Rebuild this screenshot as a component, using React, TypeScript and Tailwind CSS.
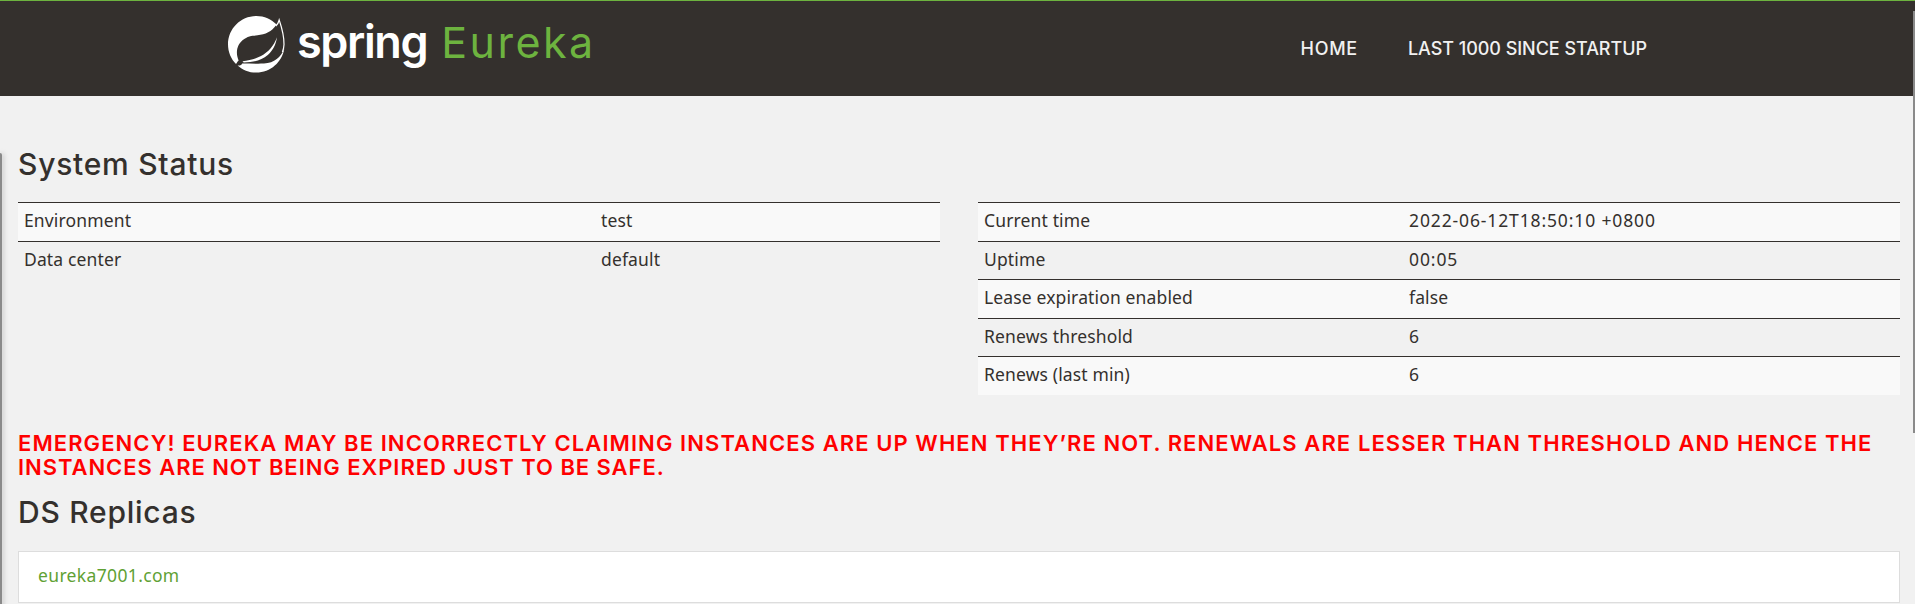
import type { ReactNode } from 'react';

type Row = { label: string; value: string; spacing?: string };

const environment: Row[] = [
  { label: 'Environment', value: 'test' },
  { label: 'Data center', value: 'default' },
];

const runtime: Row[] = [
  { label: 'Current time', value: '2022-06-12T18:50:10 +0800', spacing: 'tracking-[0.87px]' },
  { label: 'Uptime', value: '00:05', spacing: 'tracking-[0.9px]' },
  { label: 'Lease expiration enabled', value: 'false' },
  { label: 'Renews threshold', value: '6' },
  { label: 'Renews (last min)', value: '6' },
];

function Leaf() {
  return (
    <svg className="h-[57px] w-[57px]" viewBox="0 0 57 57" aria-hidden="true">
      <path
        fill="#fff"
        d="M28.300 0C12.700 0 0 12.700 0 28.300c0 7.700 3 14.700 8 19.800l2.600-3.600C7 36 9.500 28.500 14.500 24.300c5.500-4.600 10-4.500 15-5C37.500 18.500 43.500 16 48.600 8.600 43.400 3.300 36.300 0 28.300 0Z"
      />
      <path fill="#fff" d="M49 21.200c-3.500 9-8.500 14.600-16 18.800-5.500 3-11.500 4.200-18.600 5.300 1.200.7 1 .9 1.200 1.200 10.400-.5 18-2 24.200-7.500 5.200-4.700 8-10.300 9.200-17.800Z" />
      <path fill="#fff" d="M9.600 49.400c5 4.500 11.500 7.200 18.700 7.200 14.200 0 25.900-10.400 28-24-3.500 8.700-9.800 14.600-20.300 15-7.500.3-14-.1-21.800-.1-.9 1.700-2.400 2.500-4.600 1.900Z" />
      <path fill="none" stroke="#fff" strokeWidth="1.200" d="M47.800 10c1.700-1.700 2.800-3.500 3.400-6 2.200 6.500 5 15 4.800 24.500-.1 3-.7 5.400-1.600 7.500" />
      <circle cx="11.200" cy="46.800" r="1.900" fill="#34302d" />
    </svg>
  );
}

function StatusTable({ rows, columns }: { rows: Row[]; columns: string }) {
  return (
    <dl className="text-[17.5px] leading-[24px] tracking-[0.14px]">
      {rows.map((row) => (
        <div key={row.label} className={`grid h-[38.5px] border-t border-[#34302d] px-1.5 pt-[5px] odd:bg-[#f9f9f9] ${columns}`}>
          <dt>{row.label}</dt>
          <dd className={row.spacing}>{row.value}</dd>
        </div>
      ))}
    </dl>
  );
}

function Heading({ children, className }: { children: ReactNode; className: string }) {
  return (
    <h1 className={`font-['Inter',sans-serif] text-[30px] leading-[34px] font-medium tracking-[0.75px] ${className}`}>
      {children}
    </h1>
  );
}

export default function App() {
  return (
    <div className="relative h-[604px] overflow-hidden bg-[#f1f1f1] font-['Noto_Sans',sans-serif] text-[#34302d]">
      <header className="flex h-24 border-t border-[#6db33f] bg-[#34302d] pl-[228px]">
        <a className="flex pt-[15px]" href="#">
          <Leaf />
          <span className="ml-3 font-['Inter',sans-serif] text-[45px] leading-[52px] font-semibold tracking-[-1.4px] text-white">
            spring
          </span>
          <span className="ml-[14px] font-['Inter',sans-serif] text-[43px] leading-[52px] tracking-[2.5px] text-[#6db33f]">
            Eureka
          </span>
        </a>
        <nav className="ml-auto flex pt-9 pr-[268px] font-['Inter',sans-serif] text-[18px] leading-6 font-medium text-[#f1f1f1]">
          <a className="mr-[50px] tracking-[0.7px]" href="#">HOME</a>
          <a className="tracking-[-0.04px]" href="#">LAST 1000 SINCE STARTUP</a>
        </nav>
      </header>
      <main className="pr-[15px] pl-[18px]">
        <Heading className="mt-[51px]">System Status</Heading>
        <div className="mt-[21px] grid h-[193px] grid-cols-2 gap-[38px]">
          <StatusTable rows={environment} columns="grid-cols-[577px_1fr]" />
          <StatusTable rows={runtime} columns="grid-cols-[425px_1fr]" />
        </div>
        <p className="mt-9 font-['Inter',sans-serif] text-[22px] leading-6 font-semibold whitespace-nowrap text-[#ff0000]">
          <span className="block tracking-[1.08px]">
            EMERGENCY! EUREKA MAY BE INCORRECTLY CLAIMING INSTANCES ARE UP WHEN THEY’RE NOT. RENEWALS ARE LESSER THAN THRESHOLD AND HENCE THE
          </span>{' '}
          <span className="block tracking-[0.94px]">INSTANCES ARE NOT BEING EXPIRED JUST TO BE SAFE.</span>
        </p>
        <Heading className="mt-[16px]">DS Replicas</Heading>
        <div className="mt-[22px] h-[52px] border border-[#dddddd] bg-white pt-[11px] pl-[19px] text-[17.5px] leading-6 tracking-[0.35px] text-[#5fa134]">
          <a href="#">eureka7001.com</a>
        </div>
      </main>
      <div className="absolute top-[153px] left-0 h-[460px] w-0.5 rounded-tr-sm bg-[#8a8a8a] shadow-[1px_0_5px_#aaa]" />
      <div className="absolute top-[11px] right-0 h-[422px] w-0.5 bg-[#8a8a8a]" />
    </div>
  );
}
